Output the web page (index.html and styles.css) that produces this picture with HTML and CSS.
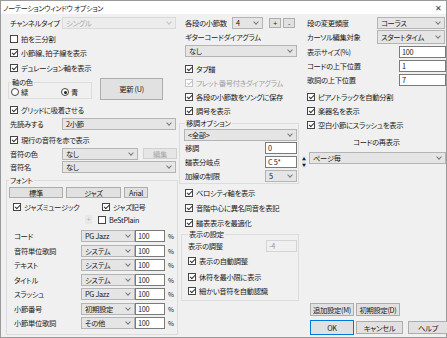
FILE: index.html
```html
<html>
<head>
    <title>ノーテーションウィンドウ オプション</title>
    <link rel="stylesheet" href="styles.css">
</head>
<body>
<div class="win">
    <div class="title"><span>ノーテーションウィンドウ オプション</span><span class="close">✕</span></div>
    <div class="body">
        <!-- left column -->
        <div class="col left">
            <div class="row h14"><span class="lbl w52">チャンネルタイプ</span><span class="sel dis w114">シングル</span></div>
            <div class="row h14 mt2"><span class="cb"></span>拍を三分割</div>
            <div class="row h14"><span class="cb on"></span>小節線、拍子線を表示</div>
            <div class="row h14 mt1"><span class="cb on"></span>デュレーション軸を表示</div>
            <div class="axis">
                <fieldset class="grp axis-grp">
                    <legend>軸の色</legend>
                    <div class="radios"><span class="rd"></span>緑<span class="rd on gap"></span>青</div>
                </fieldset>
                <span class="btn upd">更新 (U)</span>
            </div>
            <div class="row h14 mt3"><span class="cb on"></span>グリッドに吸着させる</div>
            <div class="row h14"><span class="lbl w52">先読みする</span><span class="sel w114">2小節</span></div>
            <div class="row h14 mt2"><span class="cb on"></span>現行の音符を赤で表示</div>
            <div class="row h13"><span class="lbl w52">音符の色</span><span class="sel w76">なし</span><span class="btn dis edit">編集</span></div>
            <div class="row h14"><span class="lbl w52">音符名</span><span class="sel w114">なし</span></div>
            <fieldset class="grp font-grp">
                <legend>フォント</legend>
                <div class="row fbtns">
                    <span class="btn fb w54">標準</span><span class="btn fb w55">ジャズ</span><span class="btn fb w24">Arial</span>
                </div>
                <div class="row h12 mt3 pl4"><span class="cb on"></span><span class="w78">ジャズミュージック</span><span class="cb on"></span>ジャズ記号</div>
                <div class="row h13 pl4"><span class="w72"></span><span class="plus">+</span><span class="cb"></span>BeStPlain</div>
                <div class="frows">
                    <div class="frow"><span class="lbl w67">コード</span><span class="sel w54">PG Jazz</span><span class="inp w30">100</span><span class="pct">%</span></div>
                    <div class="frow"><span class="lbl w67">音符単位歌詞</span><span class="sel w54">システム</span><span class="inp w30">100</span><span class="pct">%</span></div>
                    <div class="frow"><span class="lbl w67">テキスト</span><span class="sel w54">システム</span><span class="inp w30">100</span><span class="pct">%</span></div>
                    <div class="frow"><span class="lbl w67">タイトル</span><span class="sel w54">システム</span><span class="inp w30">100</span><span class="pct">%</span></div>
                    <div class="frow"><span class="lbl w67">スラッシュ</span><span class="sel w54">PG Jazz</span><span class="inp w30">100</span><span class="pct">%</span></div>
                    <div class="frow"><span class="lbl w67">小節番号</span><span class="sel w54">初期設定</span><span class="inp w30">100</span><span class="pct">%</span></div>
                    <div class="frow"><span class="lbl w67">小節単位歌詞</span><span class="sel w54">その他</span><span class="inp w30">100</span><span class="pct">%</span></div>
                </div>
            </fieldset>
        </div>

        <!-- middle column -->
        <div class="col mid">
            <div class="row h14"><span class="lbl w47">各段の小節数</span><span class="sel w31">4</span><span class="btn pm ml6">+</span><span class="btn pm ml2">-</span></div>
            <div class="row h14">ギターコードダイアグラム</div>
            <div class="row h14"><span class="sel w112">なし</span></div>
            <div class="row h14 mt4"><span class="cb on"></span>タブ譜</div>
            <div class="row h14 off"><span class="cb on dis"></span>フレット番号付きダイアグラム</div>
            <div class="row h14"><span class="cb on"></span>各段の小節数をソングに保存</div>
            <div class="row h14"><span class="cb on"></span>調号を表示</div>
            <fieldset class="grp trans-grp">
                <legend>移調オプション</legend>
                <div class="row h13"><span class="sel w113 shift">&lt;全部&gt;</span></div>
                <div class="row h14"><span class="lbl w80">移調</span><span class="inp w32">0</span></div>
                <div class="row h14"><span class="lbl w80">譜表分岐点</span><span class="inp w32">C 5*</span><span class="spin"><i>▲</i><i>▼</i></span></div>
                <div class="row h14"><span class="lbl w80">加線の制限</span><span class="sel w32">5</span></div>
            </fieldset>
            <div class="row h15 mt1"><span class="cb on"></span>ベロシティ軸を表示</div>
            <div class="row h15"><span class="cb on"></span>音階中心に異名同音を表記</div>
            <div class="row h15"><span class="cb on"></span>譜表表示を最適化</div>
            <fieldset class="grp view-grp">
                <legend>表示の設定</legend>
                <div class="row h14"><span class="lbl w78">表示の調整</span><span class="inp dis w31">-4</span></div>
                <div class="row h15"><span class="cb on"></span>表示の自動調整</div>
                <div class="row h14 mt2"><span class="cb on"></span>休符を最小限に表示</div>
                <div class="row h14"><span class="cb on"></span>細かい音符を自動認識</div>
            </fieldset>
        </div>

        <!-- right column -->
        <div class="col right">
            <div class="row h14"><span class="lbl w70">段の変更頻度</span><span class="sel w68">コーラス</span></div>
            <div class="row h14"><span class="lbl w70">カーソル編集対象</span><span class="sel w68 tall">スタートタイム</span></div>
            <div class="row h14 mt1"><span class="lbl w92">表示サイズ(%)</span><span class="inp w47">100</span></div>
            <div class="row h14"><span class="lbl w92">コードの上下位置</span><span class="inp w47">1</span></div>
            <div class="row h14"><span class="lbl w92">歌詞の上下位置</span><span class="inp w47">7</span></div>
            <div class="row h14 mt3"><span class="cb on"></span>ピアノトラックを自動分割</div>
            <div class="row h13"><span class="cb on"></span>楽器名を表示</div>
            <div class="row h14 mt1"><span class="cb on"></span>空白小節にスラッシュを表示</div>
            <div class="row h14 mt3 center">コードの再表示</div>
            <div class="row h14 mt2"><span class="sel w137 ml2">ページ毎</span></div>
            <div class="spacer"></div>
            <div class="row btns"><span class="btn bb w44">追加設定(M)</span><span class="btn bb w44">初期設定(D)</span></div>
            <div class="row btns mt4"><span class="btn bb ok w44">OK</span><span class="btn bb w47">キャンセル</span><span class="btn bb w40 ml3">ヘルプ</span></div>
        </div>
    </div>
</div>
</body>
</html>
```

FILE: styles.css
```css
* {
    box-sizing: border-box;
}
body {
    margin: 0;
    font-family: "Noto Sans CJK JP", "Noto Sans", sans-serif;
    font-size: 7.3px;
    font-feature-settings: "palt";
    letter-spacing: -0.3px;
    color: #1a1a1a;
}
.win {
    width: 447px;
    height: 338px;
    border: 1px solid #9a9a9a;
    background: #f0f0f0;
    display: flex;
    flex-direction: column;
}
.title {
    height: 13px;
    background: #fff;
    display: flex;
    justify-content: space-between;
    align-items: center;
    padding: 0 4px 0 2px;
    font-size: 7px;
}
.close {
    font-size: 8px;
    color: #333;
}
.body {
    flex: 1;
    display: flex;
    padding-top: 2px;
}
.col {
    display: flex;
    flex-direction: column;
}
.left {
    width: 177px;
    padding-left: 9px;
}
.mid {
    width: 122px;
    padding-left: 7px;
}
.right {
    width: 146px;
    padding-left: 7px;
    padding-bottom: 2px;
}
.row {
    display: flex;
    align-items: center;
    white-space: nowrap;
}
.h12 { height: 12px; }
.h13 { height: 13px; }
.h14 { height: 14px; }
.h15 { height: 15px; }
.mt1 { margin-top: 1px; }
.mt2 { margin-top: 2px; }
.mt3 { margin-top: 3px; }
.mt4 { margin-top: 4px; }
.ml2 { margin-left: 2px; }
.ml3 { margin-left: 3px; }
.ml6 { margin-left: 6px; }
.pl4 { padding-left: 4px; }
.center { justify-content: center; }

.lbl { flex: none; }
.w24 { width: 24px; }
.w30 { width: 30px; }
.w31 { width: 31px; }
.w32 { width: 32px; }
.w40 { width: 40px; }
.w44 { width: 44px; }
.w47 { width: 47px; }
.w52 { width: 52px; }
.w54 { width: 54px; }
.w55 { width: 55px; }
.w67 { width: 67px; }
.w68 { width: 68px; }
.w70 { width: 70px; }
.w72 { width: 72px; }
.w76 { width: 76px; }
.w78 { width: 78px; }
.w80 { width: 80px; }
.w92 { width: 92px; }
.w112 { width: 112px; }
.w113 { width: 113px; }
.w114 { width: 114px; }
.w137 { width: 137px; }

/* dropdown */
.sel {
    flex: none;
    position: relative;
    height: 12px;
    line-height: 10px;
    padding-left: 3px;
    background: #e5e5e5;
    border: 1px solid #b4b4b4;
    overflow: hidden;
}
.sel::after {
    content: "";
    position: absolute;
    right: 4px;
    top: 2px;
    width: 3px;
    height: 3px;
    border: solid #7a7a7a;
    border-width: 0 1px 1px 0;
    transform: rotate(45deg);
}
.sel.dis {
    color: #a8a8a8;
    background: #ececec;
    border-color: #dadada;
}
.sel.dis::after {
    border-color: #c4c4c4;
}
.sel.tall {
    height: 14px;
    line-height: 12px;
}
.sel.tall::after {
    top: 3px;
}
.shift {
    margin-left: -1px;
}

/* text input */
.inp {
    flex: none;
    height: 12px;
    line-height: 10px;
    padding-left: 2px;
    background: #fff;
    border: 1px solid #7a7a7a;
}
.inp.dis {
    color: #9a9a9a;
    background: #f0f0f0;
    border-color: #d4d4d4;
}
.pct {
    margin-left: 3px;
    font-size: 6.5px;
}

/* buttons */
.btn {
    flex: none;
    display: flex;
    align-items: center;
    justify-content: center;
    background: #e1e1e1;
    border: 1px solid #adadad;
}
.btn.dis {
    color: #a8a8a8;
    background: #e6e6e6;
    border-color: #d0d0d0;
}
.upd {
    width: 63px;
    height: 22px;
    margin-left: 8px;
}
.edit {
    width: 34px;
    height: 11px;
    margin-left: 5px;
}
.pm {
    width: 12px;
    height: 10px;
    font-size: 7px;
}
.fb {
    height: 11px;
    margin-right: 3px;
}
.bb {
    height: 13px;
    margin-right: 2px;
}
.ok {
    height: 15px;
    border: 1px solid #0078d7;
}
.btns {
    padding-left: 3px;
}
.fbtns {
    margin-top: 2px;
}

/* checkbox / radio */
.cb {
    flex: none;
    position: relative;
    width: 8px;
    height: 8px;
    margin-right: 3px;
    border: 1px solid #444;
    background: #fff;
}
.cb.on::after {
    content: "";
    position: absolute;
    left: 2px;
    top: 0;
    width: 2px;
    height: 4px;
    border: solid #333;
    border-width: 0 1px 1px 0;
    transform: rotate(45deg);
}
.cb.dis {
    border-color: #c4c4c4;
}
.cb.dis::after {
    border-color: #c4c4c4;
}
.off {
    color: #a0a0a0;
}
.rd {
    flex: none;
    position: relative;
    width: 8px;
    height: 8px;
    margin-right: 2px;
    border: 1px solid #444;
    border-radius: 50%;
    background: #fff;
}
.rd.on::after {
    content: "";
    position: absolute;
    left: 1.5px;
    top: 1.5px;
    width: 3px;
    height: 3px;
    border-radius: 50%;
    background: #222;
}
.rd.gap {
    margin-left: 33px;
}
.plus {
    width: 7px;
    height: 9px;
    margin-right: 6px;
    text-align: center;
    line-height: 9px;
    font-size: 7px;
    color: #b0b0b0;
    background: #e8e8e8;
}

/* group frames */
.grp {
    margin: 0;
    border: 1px solid #dcdcdc;
    min-width: 0;
}
.grp legend {
    padding: 0 1px;
    line-height: 9px;
}
.axis {
    display: flex;
    align-items: stretch;
    height: 22px;
    margin-top: 3px;
}
.axis-grp {
    width: 84px;
    margin-left: -2px;
    padding: 0 0 0 2px;
    height: 21px;
}
.radios {
    display: flex;
    align-items: center;
    height: 10px;
}
.font-grp {
    width: 172px;
    margin: 2px 0 0 -4px;
    padding: 0 0 3px 2px;
}
.frows {
    margin-top: 3px;
    padding-left: 5px;
}
.frow {
    display: flex;
    align-items: center;
    height: 14.5px;
}
.trans-grp {
    width: 120px;
    margin: 1px 0 0 -6px;
    padding: 0 0 0 5px;
}
.spin {
    display: flex;
    flex-direction: column;
    margin-left: 5px;
    width: 5px;
    height: 12px;
    font-size: 4px;
    line-height: 6px;
    text-align: center;
    background: #e8e8e8;
}
.spin i {
    font-style: normal;
}
.view-grp {
    width: 118px;
    margin: 0 0 0 -4px;
    padding: 0 0 2px 6px;
}
.spacer {
    flex: 1;
}
```
